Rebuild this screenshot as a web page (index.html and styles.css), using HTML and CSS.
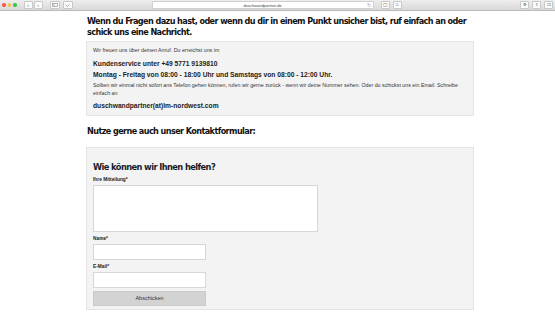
FILE: index.html
```
<!DOCTYPE html>
<html lang="de">
<head>
    <meta charset="UTF-8">
    <meta name="viewport" content="width=device-width, initial-scale=1.0">
    <title>Kontakt - duschwandpartner.de</title>
    <link rel="stylesheet" href="styles.css">
</head>
<body>
    <!-- Browser toolbar -->
    <div class="toolbar">
        <div class="lights">
            <span class="light red"></span>
            <span class="light yellow"></span>
            <span class="light green"></span>
        </div>
        <div class="btn-group">
            <span class="tbtn">&#8249;</span>
            <span class="tbtn">&#8250;</span>
        </div>
        <span class="tbtn wide">
            <svg width="6" height="4" viewBox="0 0 6 4"><rect x="0.5" y="0.5" width="5" height="3" fill="none" stroke="#888" stroke-width="0.6"/><line x1="2" y1="0.5" x2="2" y2="3.5" stroke="#888" stroke-width="0.6"/></svg>
        </span>
        <span class="tbtn wide">
            <svg width="5" height="3" viewBox="0 0 5 3"><path d="M0.5 0.5 L2.5 2.5 L4.5 0.5" fill="none" stroke="#888" stroke-width="0.7"/></svg>
        </span>
        <div class="url">
            <span class="url-text">duschwandpartner.de</span>
            <span class="reload">&#8635;</span>
        </div>
        <span class="tbtn small">&#9711;</span>
        <span class="tbtn small">&#9633;</span>
        <div class="spacer"></div>
        <span class="tbtn small">&#9881;</span>
        <span class="tbtn small">&#8679;</span>
        <span class="tbtn small">&#10064;</span>
    </div>

    <main class="page">
        <h2 class="lead">Wenn du Fragen dazu hast, oder wenn du dir in einem Punkt unsicher bist, ruf einfach an oder schick uns eine Nachricht.</h2>

        <div class="box info">
            <p class="small">Wir freuen uns über deinen Anruf. Du erreichst uns im</p>
            <p class="strong">Kundenservice unter +49 5771 9139810</p>
            <p class="strong tight">Montag - Freitag von 08:00 - 18:00 Uhr und Samstags von 08:00 - 12:00 Uhr.</p>
            <p class="small">Sollten wir einmal nicht sofort ans Telefon gehen können, rufen wir gerne zurück - wenn wir deine Nummer sehen. Oder du schickst uns ein Email. Schreibe einfach an</p>
            <p class="strong">duschwandpartner(at)lm-nordwest.com</p>
        </div>

        <h2 class="lead">Nutze gerne auch unser Kontaktformular:</h2>

        <form class="box contact">
            <h3>Wie können wir Ihnen helfen?</h3>
            <label for="msg">Ihre Mitteilung*</label>
            <textarea id="msg"></textarea>
            <label for="name">Name*</label>
            <input type="text" id="name">
            <label for="mail">E-Mail*</label>
            <input type="email" id="mail">
            <button type="button">Abschicken</button>
        </form>
    </main>
</body>
</html>
```
FILE: styles.css
```
body {
    margin: 0;
    background: #fff;
    color: #1b1b1b;
    font-family: 'Liberation Sans', Arial, sans-serif;
}

/* browser chrome */
.toolbar {
    height: 11px;
    display: flex;
    align-items: center;
    gap: 3px;
    padding: 0 2px;
    background: linear-gradient(#eeeeee, #d9d9d9);
    border-bottom: 1px solid #b9b9b9;
    box-sizing: border-box;
}
.lights {
    display: flex;
    gap: 2px;
    margin-right: 4px;
}
.light {
    width: 3.5px;
    height: 3.5px;
    border-radius: 50%;
}
.red { background: #fc5753; }
.yellow { background: #fdbc40; }
.green { background: #33c748; }
.btn-group {
    display: flex;
    gap: 1px;
    margin-right: 4px;
}
.tbtn {
    width: 7px;
    height: 6px;
    display: flex;
    align-items: center;
    justify-content: center;
    background: #fbfbfb;
    border: 1px solid #c8c8c8;
    border-radius: 1px;
    font-size: 6px;
    line-height: 1;
    color: #888;
}
.tbtn.wide {
    width: 8px;
}
.tbtn.small {
    font-size: 4px;
}
.url {
    margin-left: 76px;
    width: 220px;
    height: 6px;
    background: #fff;
    border: 1px solid #cfcfcf;
    border-radius: 1px;
    position: relative;
    display: flex;
    align-items: center;
    justify-content: center;
    margin-right: 4px;
}
.url-text {
    font-size: 4px;
    color: #444;
}
.reload {
    position: absolute;
    right: 2px;
    top: 0;
    font-size: 5px;
    line-height: 6px;
    color: #999;
}
.spacer {
    flex: 1;
}

/* page */
.page {
    width: 388px;
    margin-left: 86px;
}
.lead {
    font-family: 'DejaVu Sans Condensed', sans-serif;
    font-size: 9px;
    line-height: 10.5px;
    letter-spacing: -0.58px;
    font-weight: bold;
    color: #111;
    margin: 0;
    padding-left: 1px;
}
.lead:first-child {
    padding-top: 5px;
}
.box {
    background: #f3f3f3;
    border: 1px solid #e4e4e4;
    box-sizing: border-box;
}
.info {
    margin: 4px 0 10px;
    padding: 5px 6px 5px;
}
.info p {
    margin: 0;
}
.small {
    font-size: 5.3px;
    line-height: 7.5px;
    color: #333;
}
.strong {
    font-size: 6.7px;
    line-height: 8px;
    font-weight: bold;
    color: #1b1b1b;
    margin-top: 4px !important;
}
.strong.tight {
    margin-top: 3.5px !important;
}
.info .small + .strong {
    margin-top: 5px !important;
}
.strong + .small {
    margin-top: 3px !important;
}

.contact {
    margin-top: 10px;
    padding: 13px 6px 3px;
    display: flex;
    flex-direction: column;
    align-items: flex-start;
}
.contact h3 {
    font-family: 'DejaVu Sans Condensed', sans-serif;
    font-size: 9.2px;
    line-height: 11px;
    letter-spacing: -0.58px;
    font-weight: bold;
    color: #151a2a;
    margin: 0 0 5px;
}
.contact label {
    font-size: 4.8px;
    line-height: 6px;
    font-weight: bold;
    color: #222;
    margin-bottom: 2px;
}
.contact textarea,
.contact input,
.contact button {
    box-sizing: border-box;
    border: 1px solid #d6d6d6;
    background: #fff;
    margin: 0 0 4px;
    padding: 0;
    font-family: inherit;
}
.contact textarea {
    width: 225px;
    height: 47px;
    resize: none;
}
.contact input {
    width: 113px;
    height: 16px;
}
.contact button {
    width: 113px;
    height: 15px;
    margin: -1px 0 0;
    background: #d3d3d3;
    border-color: #cacaca;
    font-size: 5.5px;
    color: #333;
}
```
